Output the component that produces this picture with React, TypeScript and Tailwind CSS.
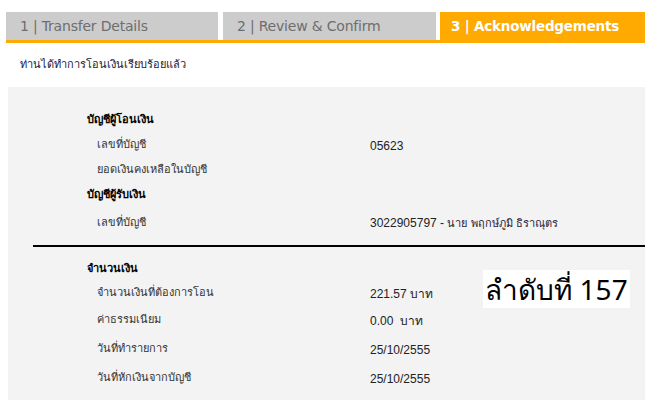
export default function App() {
  const thai = { fontFamily: "Tahoma, 'DejaVu Sans', 'Noto Sans', sans-serif" };
  const rows1 = [
    { label: "เลขที่บัญชี", value: "05623" },
    { label: "ยอดเงินคงเหลือในบัญชี", value: "" },
  ];
  const rows3 = [
    { label: "จำนวนเงินที่ต้องการโอน", value: "221.57 บาท", h: "h-[25px]" },
    { label: "ค่าธรรมเนียม", value: "0.00  บาท", h: "h-[29px]" },
    { label: "วันที่ทำรายการ", value: "25/10/2555", h: "h-[29px]" },
    { label: "วันที่หักเงินจากบัญชี", value: "25/10/2555", h: "h-[29px]" },
  ];
  return (
    <div className="w-[653px] h-[411px] bg-white pt-[12px] pl-[6px]" style={thai}>
      <div className="w-[639px]">
        <div className="flex h-[28px]" style={{ fontFamily: "'DejaVu Sans', sans-serif" }}>
          <div className="w-[212px] bg-[#cccccc] text-[#6e6e6e] text-[14px] flex items-center pl-[14px] tracking-[-0.2px]">
            1 | Transfer Details
          </div>
          <div className="ml-[5px] w-[213px] bg-[#cccccc] text-[#6e6e6e] text-[14px] flex items-center pl-[14px] tracking-[-0.2px]">
            2 | Review &amp; Confirm
          </div>
          <div className="ml-[4px] flex-1 bg-[#ffaa00] text-white text-[13.5px] font-bold flex items-center pl-[11px] tracking-[-0.2px]">
            3 | Acknowledgements
          </div>
        </div>
        <div className="h-[3px] bg-[#ffaa00]" />
        <div className="h-[44px] flex items-center pl-[14px] text-[11px] text-[#1a1a3a]">
          ท่านได้ทำการโอนเงินเรียบร้อยแล้ว
        </div>
        <div className="relative ml-[2px] bg-[#f3f3f3] h-[313px] pt-[21px] text-[11px] text-[#333]">
          <div className="h-[25px] flex items-center pl-[79px] font-bold text-black">บัญชีผู้โอนเงิน</div>
          {rows1.map((r) => (
            <div key={r.label} className="h-[25px] flex items-center">
              <div className="w-[362px] pl-[89px]">{r.label}</div>
              <div className="text-[12px] text-[#222]" style={{ fontFamily: "'Liberation Sans', Arial, sans-serif" }}>{r.value}</div>
            </div>
          ))}
          <div className="h-[25px] flex items-center pl-[79px] font-bold text-black">บัญชีผู้รับเงิน</div>
          <div className="h-[30px] flex items-center">
            <div className="w-[362px] pl-[89px]">เลขที่บัญชี</div>
            <div className="text-[12px] text-[#222]" style={{ fontFamily: "'Liberation Sans', Arial, sans-serif" }}>
              3022905797 - <span className="text-[11px] text-[#2a1a3a]" style={thai}>นาย พฤกษ์ภูมิ ธิราณุตร</span>
            </div>
          </div>
          <div className="mt-[7px] ml-[25px] h-[2px] bg-black" />
          <div className="h-[24px] mt-[10px] flex items-center pl-[79px] font-bold text-black">จำนวนเงิน</div>
          {rows3.map((r) => (
            <div key={r.label} className={`${r.h} flex items-center`}>
              <div className="w-[362px] pl-[89px]">{r.label}</div>
              <div className="text-[12px] text-[#222] whitespace-pre" style={{ fontFamily: "'Liberation Sans', Arial, sans-serif" }}>{r.value}</div>
            </div>
          ))}
          <div className="absolute left-[475px] top-[183px] w-[147px] h-[38px] bg-white flex items-center justify-center text-[28px] text-black" style={{ fontFamily: "'Noto Sans', 'DejaVu Sans', sans-serif" }}>
            ลำดับที่ 157
          </div>
        </div>
      </div>
    </div>
  );
}
